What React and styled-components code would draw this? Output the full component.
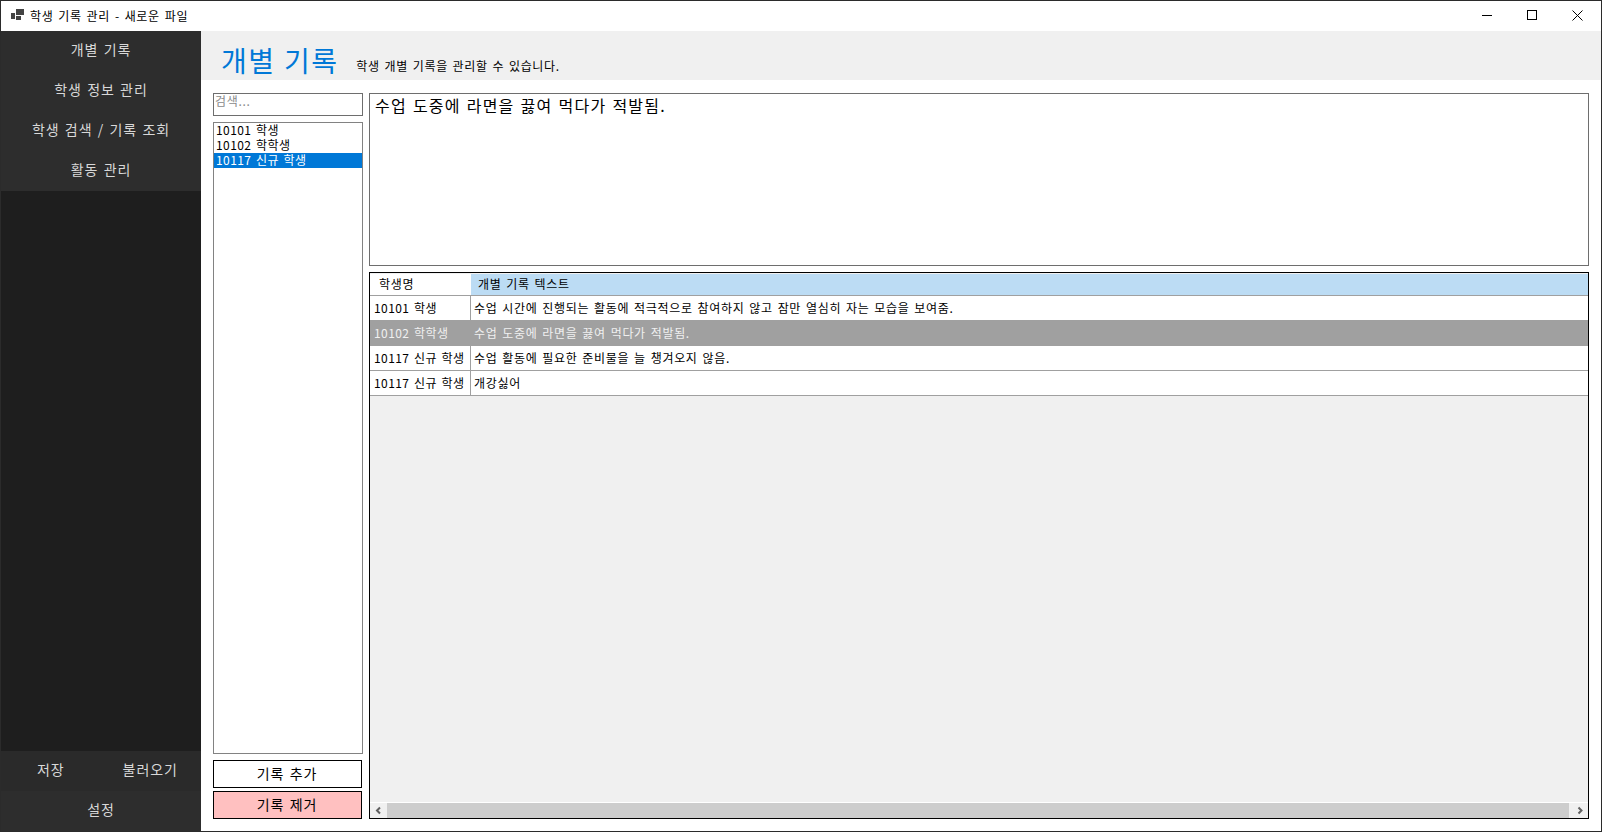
import React from "react";
import styled, { createGlobalStyle } from "styled-components";

const Global = createGlobalStyle`
  html, body { margin: 0; padding: 0; height: 100%; overflow: hidden; background: #fff; }
  #root { height: 100%; }
  * { box-sizing: border-box; }
`;
const FONT = `"Noto Sans CJK KR", "Noto Sans", sans-serif`;

const Window = styled.div`
  width: 1602px; height: 832px; border: 1px solid #2b2b2b; background: #fff;
  display: flex; flex-direction: column; font-family: ${FONT}; color: #000; overflow: hidden;
`;
const TitleBar = styled.div`
  height: 30px; flex: none; display: flex; align-items: center; background: #fff; padding-bottom: 2px;
`;
const AppIcon = styled.svg`width: 14px; height: 12px; margin-left: 10px; flex: none;`;
const TitleText = styled.span`font-size: 12px; margin-left: 5px; letter-spacing: .68px; word-spacing: 1.5px;`;
const WinControls = styled.div`margin-left: auto; display: flex; padding-right: 1px;`;
const WinButton = styled.div`
  width: ${p => p.$wide ? 46 : 45}px; height: 28px; display: flex; align-items: center; justify-content: center;
`;
const Body = styled.div`flex: 1; display: flex; min-height: 0;`;

const Sidebar = styled.nav`
  width: 200px; flex: none; background: #1e1e1e; display: flex; flex-direction: column;
`;
const NavGroup = styled.div`background: #2d2d2d;`;
const NavItem = styled.div`
  height: 40px; display: flex; align-items: center; justify-content: center;
  color: #d8d8d8; font-size: 14px; letter-spacing: .95px; word-spacing: 1.2px; padding-bottom: 5px; flex: ${p => p.$grow ? 1 : "none"};
`;
const Spacer = styled.div`flex: 1;`;
const SaveRow = styled.div`display: flex; background: #2a2a2a; padding-right: 1px;`;
const Main = styled.main`flex: 1; min-width: 0; display: flex; flex-direction: column;`;
const Header = styled.header`
  height: 49px; flex: none; background: #f0f0f0; display: flex; align-items: flex-end; padding: 0 0 0 20px;
`;
const PageTitle = styled.h1`
  margin: 0; font-size: 28px; font-weight: 400; color: #0078d7; line-height: 40px; letter-spacing: 1.4px; word-spacing: 1px;
`;
const Subtitle = styled.span`font-size: 12px; margin: 0 0 5px 18px; line-height: 18px; letter-spacing: .7px; word-spacing: 1.3px;`;
const Content = styled.div`
  flex: 1; min-height: 0; display: flex; gap: 6px; padding: 13px 12px 12px 12px;
`;
const LeftCol = styled.div`width: 150px; flex: none; display: flex; flex-direction: column;`;
const SearchBox = styled.div`
  height: 23px; flex: none; border: 1px solid #6e6e6e; color: #8a8a8a; font-size: 12px; line-height: 13px; padding-left: 1px; letter-spacing: .7px;
`;
const StudentList = styled.ul`
  flex: 1; margin: 6px 0 0; padding: 0; list-style: none; border: 1px solid #828282; min-height: 0;
`;
const StudentItem = styled.li`
  height: 15px; line-height: 14px; font-size: 12px; padding-left: 2px; letter-spacing: .42px; word-spacing: 1.5px;
  background: ${p => p.$selected ? "#0078d7" : "transparent"};
  color: ${p => p.$selected ? "#fff" : "#000"};
`;
const ActionButton = styled.button`
  width: 149px; height: 28px; flex: none; margin-top: ${p => p.$first ? "6px" : "3px"};
  border: 1px solid #000; background: ${p => p.$danger ? "#ffc0c0" : "#fff"};
  font-family: ${FONT}; font-size: 14px; color: #000; padding: 0 1px 2px 0; letter-spacing: .95px; word-spacing: 1.2px;
`;
const RightCol = styled.div`flex: 1; min-width: 0; display: flex; flex-direction: column;`;
const Editor = styled.div`
  height: 173px; flex: none; border: 1px solid #6e6e6e; padding: 0 5px; font-size: 16px; line-height: 22px; letter-spacing: 1.2px; word-spacing: 1.3px;
`;
const GridView = styled.div`
  flex: 1; min-height: 0; margin-top: 6px; border: 1px solid #000; background: #f0f0f0;
  display: flex; flex-direction: column; padding-top: 1px;
`;
const GridTable = styled.div`flex: 1; min-height: 0;`;
const GridRow = styled.div`
  display: grid; grid-template-columns: 101px 1fr; height: ${p => p.$height}px;
  background: ${p => p.$selected ? "#a0a0a0" : "#fff"};
  color: ${p => p.$selected ? "#f0f0f0" : "#000"};
  border-bottom: ${p => p.$selected ? "0" : "1px solid #a0a0a0"};
  font-size: 12px; letter-spacing: .68px; word-spacing: 1.5px;
`;
const Cell = styled.div`
  padding-left: ${p => p.$pad || 3}px; white-space: nowrap; overflow: hidden;
  border-right: ${p => p.$divider ? "1px solid #a0a0a0" : "0"};
  background: ${p => p.$bg || "transparent"};
  line-height: ${p => p.$lh || 24}px;
`;
const NameCell = styled(Cell)`letter-spacing: .42px;`;
const HScroll = styled.div`
  height: 16px; flex: none; display: flex; align-items: center; background: #f0f0f0; border-top: 1px solid #fff;
`;
const Arrow = styled.svg`width: ${p => p.$w}px; height: 15px; flex: none;`;
const Thumb = styled.div`flex: 1; height: 15px; background: #cdcdcd;`;

const rows = [
  ["10101 학생", "수업 시간에 진행되는 활동에 적극적으로 참여하지 않고 잠만 열심히 자는 모습을 보여줌."],
  ["10102 학학생", "수업 도중에 라면을 끓여 먹다가 적발됨.", true],
  ["10117 신규 학생", "수업 활동에 필요한 준비물을 늘 챙겨오지 않음."],
  ["10117 신규 학생", "개강싫어"],
];

export default function App() {
  return (
    <>
      <Global />
      <Window>
        <TitleBar>
          <AppIcon viewBox="0 0 14 12">
            <rect x="0" y="4" width="4" height="6" fill="#444" />
            <rect x="5" y="0" width="8" height="6" fill="#444" />
            <rect x="5" y="7" width="5" height="4" fill="#444" />
          </AppIcon>
          <TitleText>학생 기록 관리 - 새로운 파일</TitleText>
          <WinControls>
            <WinButton>
              <svg width="10" height="10"><path d="M0 5.5H10" stroke="#000" /></svg>
            </WinButton>
            <WinButton>
              <svg width="10" height="10"><rect x=".5" y=".5" width="9" height="9" fill="none" stroke="#000" /></svg>
            </WinButton>
            <WinButton $wide>
              <svg width="11" height="11"><path d="M.5 .5L10.5 10.5M10.5 .5L.5 10.5" stroke="#000" /></svg>
            </WinButton>
          </WinControls>
        </TitleBar>
        <Body>
          <Sidebar>
            <NavGroup>
              <NavItem>개별 기록</NavItem>
              <NavItem>학생 정보 관리</NavItem>
              <NavItem>학생 검색 / 기록 조회</NavItem>
              <NavItem>활동 관리</NavItem>
            </NavGroup>
            <Spacer />
            <SaveRow>
              <NavItem $grow>저장</NavItem>
              <NavItem $grow>불러오기</NavItem>
            </SaveRow>
            <NavGroup>
              <NavItem>설정</NavItem>
            </NavGroup>
          </Sidebar>
          <Main>
            <Header>
              <PageTitle>개별 기록</PageTitle>
              <Subtitle>학생 개별 기록을 관리할 수 있습니다.</Subtitle>
            </Header>
            <Content>
              <LeftCol>
                <SearchBox>검색...</SearchBox>
                <StudentList>
                  <StudentItem>10101 학생</StudentItem>
                  <StudentItem>10102 학학생</StudentItem>
                  <StudentItem $selected>10117 신규 학생</StudentItem>
                </StudentList>
                <ActionButton $first>기록 추가</ActionButton>
                <ActionButton $danger>기록 제거</ActionButton>
              </LeftCol>
              <RightCol>
                <Editor>수업 도중에 라면을 끓여 먹다가 적발됨.</Editor>
                <GridView>
                  <GridTable>
                    <GridRow $height={22}>
                      <Cell $pad={9} $lh={20}>학생명</Cell>
                      <Cell $pad={7} $bg="#bcdcf4" $lh={20}>개별 기록 텍스트</Cell>
                    </GridRow>
                    {rows.map(([name, text, selected], i) => (
                      <GridRow key={i} $height={25} $selected={selected}>
                        <NameCell $pad={4} $divider={!selected}>{name}</NameCell>
                        <Cell>{text}</Cell>
                      </GridRow>
                    ))}
                  </GridTable>
                  <HScroll>
                    <Arrow $w={17} viewBox="0 0 17 15"><path d="M10 4.5L7 7.5L10 10.5" fill="none" stroke="#606060" strokeWidth="2" /></Arrow>
                    <Thumb />
                    <Arrow $w={19} viewBox="0 0 19 15"><path d="M9.5 4.5L12.5 7.5L9.5 10.5" fill="none" stroke="#606060" strokeWidth="2" /></Arrow>
                  </HScroll>
                </GridView>
              </RightCol>
            </Content>
          </Main>
        </Body>
      </Window>
    </>
  );
}
